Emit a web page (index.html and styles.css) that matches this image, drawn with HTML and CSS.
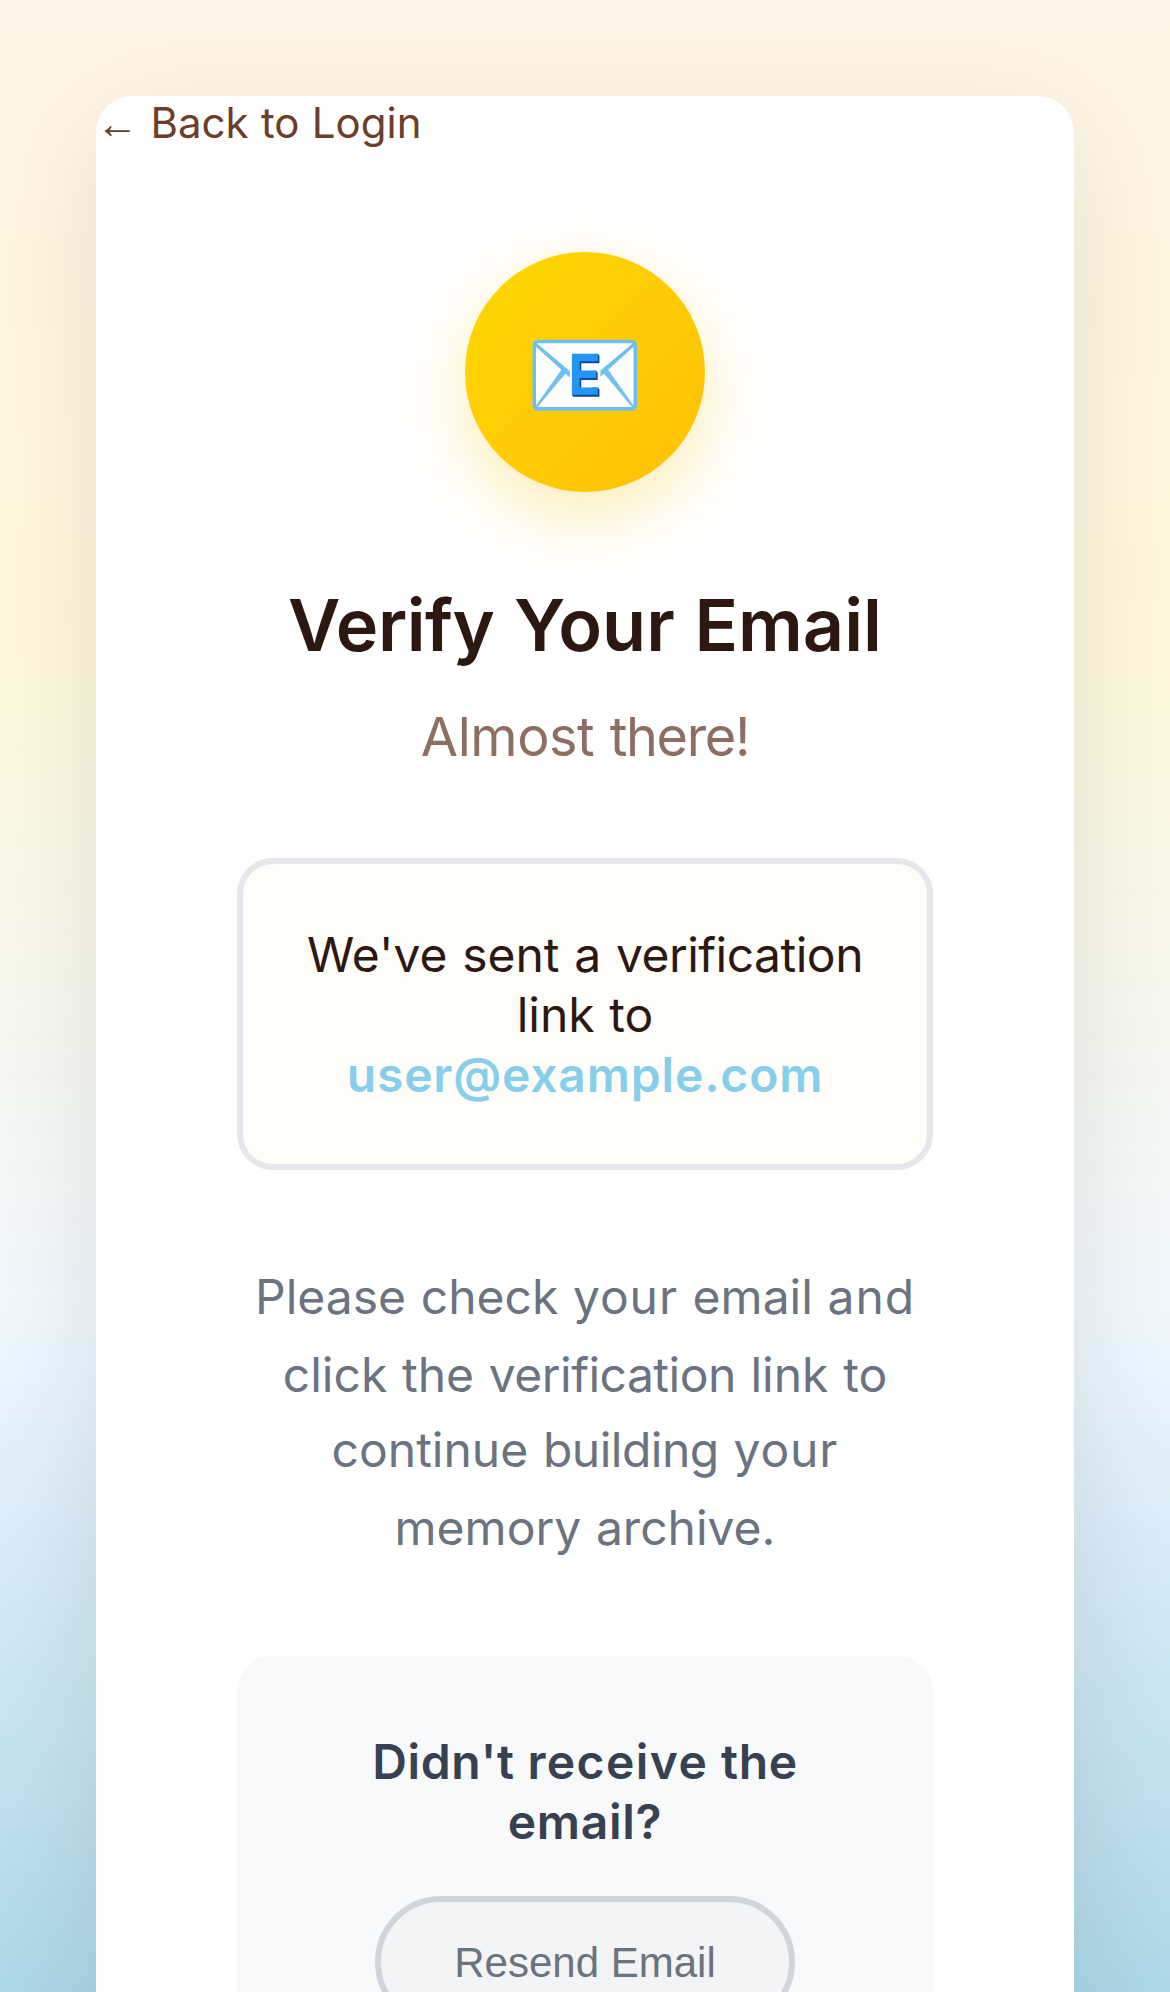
FILE: index.html
```html
<!DOCTYPE html>
<html lang="en">
<head>
<meta charset="utf-8">
<title>Verify Your Email</title>
<link rel="stylesheet" href="styles.css">
</head>
<body>
<div class="screen">
  <main class="card">
    <a class="back-link"><span class="arrow">←</span> Back to Login</a>
    <div class="content">
      <div class="icon">📧</div>
      <h1 class="title"><span class="tight">Verify</span> Your Email</h1>
      <p class="subtitle">Almost <span class="tighter">there!</span></p>
      <div class="notice">We've sent a <span class="tight">verification</span> link to <strong class="address">user@example.com</strong></div>
      <p class="instructions">Please check <span class="loose">your</span> email <span class="loose">and</span> click the <span class="tight">verification</span> link to continue <span class="tight">building</span> <span class="loose">your</span> memory archive.</p>
      <section class="resend">
        <h2 class="resend-title">Didn't <span class="looser">receive</span> the email?</h2>
        <button class="resend-button" type="button">Resend Email</button>
      </section>
    </div>
  </main>
</div>
</body>
</html>
```
FILE: styles.css
```css
* { box-sizing: border-box; margin: 0; padding: 0; }

html, body { width: 1170px; height: 1992px; overflow: hidden; }

/* Phone-sized layout (390 x 664), magnified three times */
.screen {
  width: 390px;
  height: 664px;
  padding: 32px;
  overflow: hidden;
  transform: scale(3);
  transform-origin: 0 0;
  font-family: Inter, "Liberation Sans", sans-serif;
  font-size: 16px;
  color: #2c1810;
  background: linear-gradient(180deg, #fff5e6 0%, #fff8dc 33%, #f0f8ff 66%, #add8e6 100%);
}

.card {
  background: #fff;
  border-radius: 12px;
  box-shadow: 0 10px 40px rgba(0, 0, 0, 0.1);
  height: 760px;
}

.back-link {
  display: block;
  height: 17px;
  font-size: 14px;
  line-height: 18px;
  word-spacing: 0.2px;
  color: #6b3e2a;
}

.arrow { font-family: "Liberation Sans", Arial, sans-serif; }

.content {
  padding: 35px 47px;
  text-align: center;
}

.icon {
  display: flex;
  align-items: center;
  justify-content: center;
  width: 80px;
  height: 80px;
  margin: 0 auto 30px;
  border-radius: 50%;
  font-size: 32px;
  background: linear-gradient(135deg, #ffd700, #ffc107);
  box-shadow: 0 8px 24px rgba(255, 193, 7, 0.3);
}

.title { margin-bottom: 12px; font-size: 24px; font-weight: 600; word-spacing: 0.5px; }

.subtitle {
  margin-bottom: 30px;
  font-size: 18px;
  letter-spacing: -0.15px;
  word-spacing: 0.2px;
  color: #8d6e63;
}

.notice {
  margin-bottom: 30px;
  padding: 20px;
  border: 2px solid #e5e7eb;
  border-radius: 12px;
  background: #fffdf9;
  word-spacing: 0.4px;
}

.address { font-weight: 600; letter-spacing: 0.28px; color: #87ceeb; }

.instructions { margin-bottom: 30px; line-height: 1.6; word-spacing: 0.4px; color: #6b7280; }

.resend { padding: 25px; border-radius: 12px; background: #f8f9fb; }

.resend-title {
  margin-bottom: 15px;
  font-size: 16px;
  font-weight: 600;
  letter-spacing: 0.22px;
  color: #374151;
}

.tight { letter-spacing: -0.17px; }
.tighter { letter-spacing: -0.45px; }
.loose { letter-spacing: 0.3px; }
.looser { letter-spacing: 0.47px; }

.resend-button {
  padding: 12px 24px;
  border: 2px solid #d1d5db;
  border-radius: 25px;
  background: #f3f4f6;
  color: #6b7280;
  font-family: "Liberation Sans", Arial, sans-serif;
  font-size: 14px;
}
```
